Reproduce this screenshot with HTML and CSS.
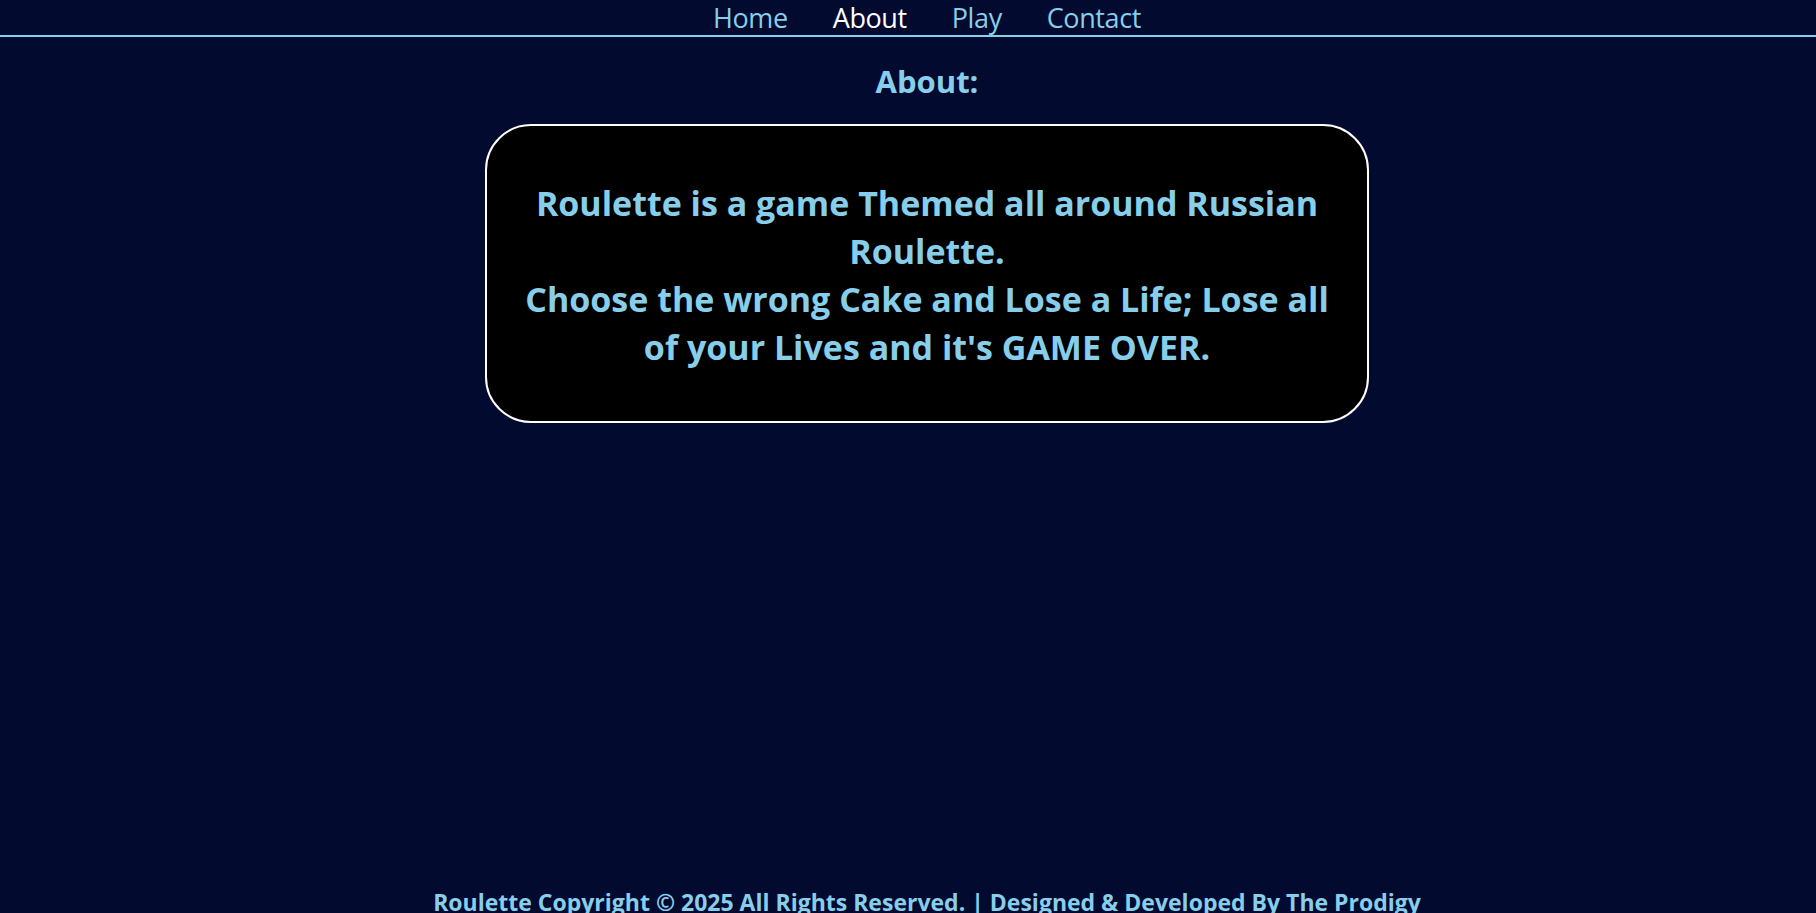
FILE: index.html
```html
<!DOCTYPE html>
<html lang="en">
<head>
<meta charset="utf-8">
<title>Roulette - About</title>
<link rel="stylesheet" href="styles.css">
</head>
<body>
<header class="site-header">
  <nav>
    <ul class="nav-list">
      <li><a class="nav-link" href="#">Home</a></li>
      <li><a class="nav-link active" href="#">About</a></li>
      <li><a class="nav-link" href="#">Play</a></li>
      <li><a class="nav-link" href="#">Contact</a></li>
    </ul>
  </nav>
</header>
<main class="content">
  <h1 class="page-title">About:</h1>
  <section class="about-box">
    <p class="about-text">Roulette is a game Themed all around Russian Roulette.<br>Choose the wrong Cake and Lose a Life; Lose all of your Lives and it's GAME OVER.</p>
  </section>
</main>
<footer class="site-footer">
  <p class="footer-text">Roulette Copyright © 2025 All Rights Reserved. | Designed &amp; Developed By The Prodigy</p>
</footer>
</body>
</html>
```
FILE: styles.css
```css
html, body {
  margin: 0;
  padding: 0;
}
body {
  background: #030a30;
  color: #87ceeb;
  font-family: "Open Sans", "Noto Sans", sans-serif;
  min-height: calc(100vh + 5px);
  display: flex;
  flex-direction: column;
}
.site-header {
  border-bottom: 2px solid #87ceeb;
}
.nav-list {
  list-style: none;
  margin: 0;
  padding: 0 0 0 38px;
  display: flex;
  justify-content: center;
  gap: 45px;
}
.nav-link {
  display: block;
  color: #87ceeb;
  text-decoration: none;
  font-size: 27px;
  letter-spacing: -0.4px;
  line-height: 35px;
}
.nav-link.active {
  color: #ffffff;
}
.content {
  display: flex;
  flex-direction: column;
  align-items: center;
  padding-left: 38px;
}
.page-title {
  margin: 24px 0 23px;
  font-size: 31px;
  font-weight: 700;
  line-height: 40px;
}
.about-box {
  box-sizing: border-box;
  width: 884px;
  background: #000000;
  border: 2px solid #ffffff;
  border-radius: 46px;
  padding: 53px 30px 50px;
}
.about-text {
  margin: 0;
  text-align: center;
  font-size: 34px;
  font-weight: 700;
  line-height: 48px;
}
.site-footer {
  margin-top: auto;
  padding-left: 38px;
  text-align: center;
}
.footer-text {
  margin: 0;
  font-size: 23px;
  font-weight: 700;
}
```
